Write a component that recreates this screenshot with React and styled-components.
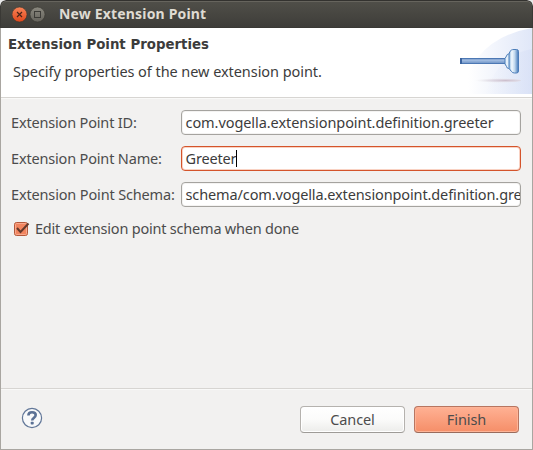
import React from "react";
import styled, { createGlobalStyle } from "styled-components";

const GlobalStyle = createGlobalStyle`
  * { box-sizing: border-box; }
  body { margin: 0; background: #e9e9e9; overflow: hidden; }
`;

const Dialog = styled.div`
  width: 533px;
  height: 450px;
  display: flex;
  flex-direction: column;
  overflow: hidden;
  border-radius: 6px 6px 0 0;
  background: #f2f1f0;
  color: #4c4c4c;
  font: 14.5px/20px "Noto Sans", "Open Sans", sans-serif;
  white-space: nowrap;
`;

const TitleBar = styled.header`
  flex: none;
  height: 28px;
  display: flex;
  align-items: center;
  padding-left: 11px;
  background: linear-gradient(#504f49, #3e3d39);
  border: 1px solid #3a3935;
  border-top-color: #33322f;
  border-radius: 6px 6px 0 0;
  box-shadow: inset 0 1px #66645d;
`;

const WindowButtons = styled.svg`
  width: 36px;
  height: 18px;
  margin-right: 11px;
`;

const Text = styled.span`
  letter-spacing: ${(p) => p.$tracking || 0}px;
`;

const WindowTitle = styled(Text)`
  color: #dfdbd2;
  font-weight: 700;
  font-size: 14px;
`;

const Body = styled.main`
  flex: 1;
  display: flex;
  flex-direction: column;
  border: 1px solid #a9a6a1;
  border-top: 0;
`;

const Banner = styled.section`
  height: 70px;
  display: flex;
  justify-content: space-between;
  background: #fff;
  border-bottom: 1px solid #d7d5d2;
`;

const BannerText = styled.div`
  display: flex;
  flex-direction: column;
  padding: 7px 0 0 7px;
  gap: 6px;
  color: #3c3c3c;
`;

const Heading = styled.h1`
  margin: 0;
  font-family: "DejaVu Sans", sans-serif;
  font-size: 13.33px;
  line-height: 20px;
  font-weight: 700;
  letter-spacing: ${(p) => p.$tracking}px;
`;

const Description = styled(Text)`
  padding-left: 5px;
`;

const BannerArt = styled.svg`
  width: 75px;
  height: 66px;
`;

const Form = styled.form`
  flex: 1;
  display: flex;
  flex-direction: column;
  gap: 11px;
  padding: 11px 11px 0 10px;
  border-top: 1px solid #f9f9f8;
`;

const Row = styled.label`
  display: grid;
  grid-template-columns: 170px 340px;
  align-items: center;
`;

const Label = styled(Text)`
  padding-bottom: 2px;
`;

const Field = styled.div`
  height: 25px;
  display: flex;
  align-items: center;
  padding: 0 0 2px 3.5px;
  overflow: hidden;
  border: 1px solid ${(p) => (p.$focused ? "#d4542b" : "#a5a39f")};
  border-radius: 4px;
  background: #fff;
  color: #3c3c3c;
  box-shadow: inset 0 0 0 1px ${(p) => (p.$focused ? "#f9d2c3" : "#f4f3f2")};
`;

const Caret = styled.i`
  width: 1px;
  height: 17px;
  margin-top: 2px;
  background: #000;
`;

const CheckRow = styled.label`
  display: flex;
  align-items: center;
  height: 22px;
  gap: 5px;
  padding-left: 2px;
`;

const CheckMark = styled.svg`
  width: 17px;
  height: 17px;
`;

const Footer = styled.footer`
  height: 61px;
  display: flex;
  align-items: center;
  gap: 9px;
  padding: 0 13px 0 20px;
  border-top: 1px solid #d7d5d2;
  box-shadow: inset 0 1px #f9f9f8;
`;

const HelpIcon = styled.svg`
  width: 22px;
  height: 22px;
  margin: -2px auto 0 0;
`;

const Button = styled.button`
  width: 105px;
  height: 27px;
  padding: 0 0 1px;
  font: inherit;
  color: #4c4c4c;
  border: 1px solid ${(p) => (p.$primary ? "#b87560" : "#b5b2ae")};
  border-bottom-color: ${(p) => (p.$primary ? "#996b5c" : "#9e9b97")};
  border-radius: 4px;
  background: ${(p) =>
    p.$primary ? "linear-gradient(#ffb194, #f58e68)" : "linear-gradient(#fff, #fbfbfa 50%, #ececea)"};
  box-shadow: inset 0 0 0 1px ${(p) => (p.$primary ? "#fdb497" : "#fff")};
`;

const FIELDS = [
  { label: "Extension Point ID:", labelTracking: -0.17, value: "com.vogella.extensionpoint.definition.greeter", tracking: -0.07 },
  { label: "Extension Point Name:", labelTracking: -0.17, value: "Greeter", tracking: -0.15, focused: true },
  { label: "Extension Point Schema:", labelTracking: -0.15, value: "schema/com.vogella.extensionpoint.definition.greeter.exsd", tracking: -0.12 },
];

function TitleControls() {
  return (
    <WindowButtons viewBox="0 0 36 18">
      <defs>
        <linearGradient id="close" x2="0" y2="1">
          <stop stopColor="#f88458" /><stop offset="1" stopColor="#e0471c" />
        </linearGradient>
        <linearGradient id="max" x2="0" y2="1">
          <stop stopColor="#8a887f" /><stop offset="1" stopColor="#65635c" />
        </linearGradient>
      </defs>
      <circle cx="7.5" cy="9.5" r="7.5" fill="url(#close)" stroke="#37352f" strokeWidth=".6" />
      <path d="M5 7l5 5M10 7l-5 5" stroke="#4a2418" strokeWidth="1.2" />
      <circle cx="25.5" cy="9.5" r="7.5" fill="url(#max)" stroke="#37352f" strokeWidth=".6" />
      <rect x="22.5" y="6.5" width="6" height="6" fill="none" stroke="#3c3b37" />
    </WindowButtons>
  );
}

function PlungerArt() {
  return (
    <BannerArt viewBox="0 0 75 66">
      <defs>
        <linearGradient id="glow"><stop offset=".1" stopColor="#fff" /><stop offset="1" stopColor="#e0e7f8" /></linearGradient>
        <linearGradient id="glow2"><stop stopColor="#dfe6f8" stopOpacity="0" /><stop offset="1" stopColor="#d3ddf5" /></linearGradient>
        <linearGradient id="cup"><stop stopColor="#8db8de" /><stop offset=".3" stopColor="#f3faff" /><stop offset=".6" stopColor="#c0d8ee" /><stop offset="1" stopColor="#3f76b8" /></linearGradient>
        <linearGradient id="rod" x2="0" y2="1"><stop stopColor="#7b9bc9" /><stop offset=".4" stopColor="#9db9df" /><stop offset="1" stopColor="#6e93c6" /></linearGradient>
        <radialGradient id="shade" cx=".75"><stop stopColor="#cdbfcd" /><stop offset=".55" stopColor="#dfdae4" stopOpacity=".8" /><stop offset="1" stopColor="#eee" stopOpacity="0" /></radialGradient>
      </defs>
      <path d="M4 66Q17 10 75 0V66Z" fill="url(#glow)" />
      <path d="M28 66Q42 26 75 21V66Z" fill="url(#glow2)" opacity=".5" />
      <ellipse cx="33" cy="52.5" rx="31" ry="2.5" fill="url(#shade)" />
      <rect x="3.5" y="30.5" width="45" height="5" fill="url(#rod)" stroke="#4c78b4" />
      <rect x="3" y="30" width="2" height="6" fill="#3b649f" />
      <path d="M54 26H51.5Q50 26 49.5 28L48 30.5V36L49.5 38.5Q50 40.5 51.5 40.5H54Z" fill="#e4f0fa" stroke="#4b7db9" />
      <path d="M52 26Q52.5 23 54.5 22Q55.5 21.5 57 21.5H59.5Q61.5 21.5 61.5 23.5V43Q61.5 45 59.5 45H57.5Q55.5 45 54.5 43.5L52 40.5Z" fill="url(#cup)" stroke="#4b7db9" />
    </BannerArt>
  );
}

export default function App() {
  return (
    <>
      <GlobalStyle />
      <Dialog>
        <TitleBar>
          <TitleControls />
          <WindowTitle $tracking={0.17}>New Extension Point</WindowTitle>
        </TitleBar>
        <Body>
          <Banner>
            <BannerText>
              <Heading $tracking={0}>Extension Point Properties</Heading>
              <Description $tracking={-0.06}>Specify properties of the new extension point.</Description>
            </BannerText>
            <PlungerArt />
          </Banner>
          <Form>
            {FIELDS.map((f) => (
              <Row key={f.label}>
                <Label $tracking={f.labelTracking}>{f.label}</Label>
                <Field $focused={f.focused}>
                  <Text $tracking={f.tracking}>{f.value}</Text>
                  {f.focused && <Caret />}
                </Field>
              </Row>
            ))}
            <CheckRow>
              <CheckMark viewBox="0 0 17 17">
                <rect x="1.5" y="1.5" width="13" height="13" rx="2" fill="#f2855f" stroke="#b4583a" />
                <rect x="2.5" y="2.5" width="11" height="11" rx="1" fill="none" stroke="#f9a98d" />
                <path d="M4 7L7.5 11L15.5 2.5" fill="none" stroke="#65392b" strokeWidth="2" />
              </CheckMark>
              <Label $tracking={-0.21}>Edit extension point schema when done</Label>
            </CheckRow>
          </Form>
          <Footer>
            <HelpIcon viewBox="0 0 22 22">
              <circle cx="11" cy="11" r="9.6" fill="#f8f9fa" stroke="#627798" strokeWidth="1.2" />
              <path d="M7.4 8.5Q7.5 5.3 11 5.3Q14.7 5.3 14.7 8.1Q14.7 9.7 12.9 10.8Q11.2 11.8 11.2 13.6" fill="none" stroke="#5b7195" strokeWidth="2.6" />
              <rect x="9.7" y="14.7" width="3" height="2.8" rx=".8" fill="#5b7195" />
            </HelpIcon>
            <Button type="button"><Text $tracking={-0.1}>Cancel</Text></Button>
            <Button type="button" $primary><Text $tracking={-0.1}>Finish</Text></Button>
          </Footer>
        </Body>
      </Dialog>
    </>
  );
}
